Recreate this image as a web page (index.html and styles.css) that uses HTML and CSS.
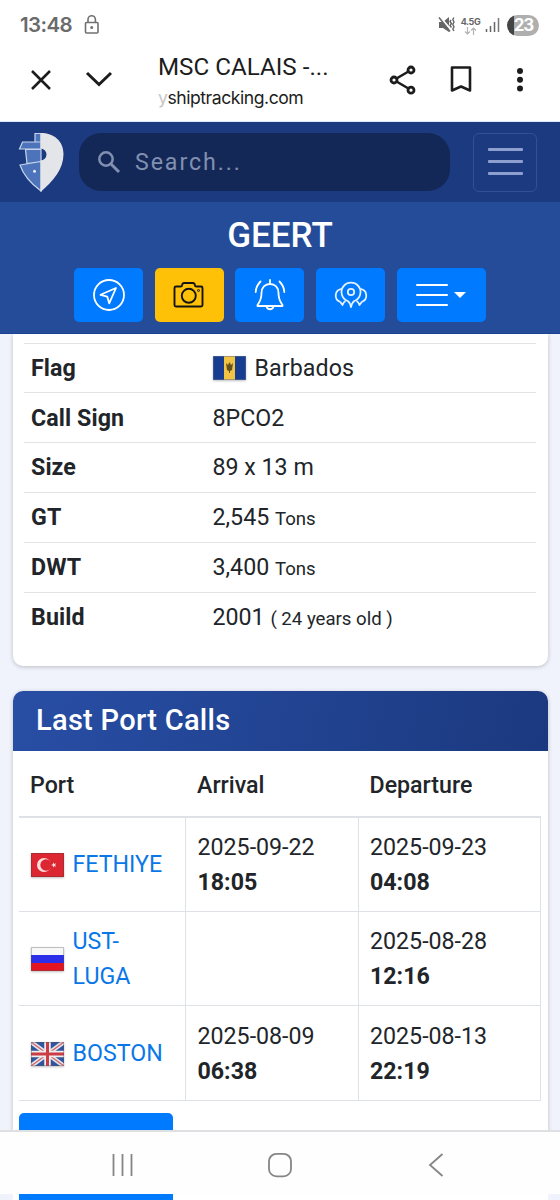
FILE: index.html
```html
<!DOCTYPE html>
<html lang="en">
<head>
<meta charset="utf-8">
<title>MSC CALAIS - GEERT</title>
<link rel="stylesheet" href="styles.css">
</head>
<body>
<div class="phone">
  <div class="status">
    <span class="clock">13:48</span>
    <svg class="lock" width="16" height="20" viewBox="0 0 16 20"><rect x="1.5" y="7.5" width="12.5" height="10.5" rx="1" fill="none" stroke="#717171" stroke-width="1.6"/><path d="M4 7V4.5a3.7 3.7 0 0 1 7.4 0V7" fill="none" stroke="#717171" stroke-width="1.6"/><circle cx="7.7" cy="12.5" r="1.5" fill="#717171"/></svg>
    <svg class="mute" width="18" height="18" viewBox="0 0 18 18"><path d="M1 6h4l6-5v15l-6-4H1z" fill="#666"/><path d="M1 0l13 15" stroke="#fff" stroke-width="2"/><path d="M1 1.500l11 14" stroke="#666" stroke-width="1.5"/><path d="M13 4l-1 1.500 1.500 2-1.500 2 1.500 2M16 1.500l-1.200 2 1.200 2.500-1.200 2.500 1.200 2.500-1.200 2 1.200 2" fill="none" stroke="#666" stroke-width="1.4"/></svg>
    <div class="net"><span>4.5G</span><svg width="13" height="8" viewBox="0 0 13 8"><path d="M3.500 0v7M1 4.500L3.500 7 6 4.500M9.500 8V1M7 3.500L9.500 1 12 3.500" fill="none" stroke="#b4b4b4" stroke-width="1.200"/></svg></div>
    <svg class="signal" width="15" height="16" viewBox="0 0 15 16"><path d="M1.500 12v3M5.500 9v6M9.500 5v10" stroke="#666" stroke-width="1.500"/><path d="M13.500 1v14" stroke="#777" stroke-width="1.500"/></svg>
    <span class="battery">23</span>
  </div>
  <div class="toolbar">
    <svg width="24" height="24" viewBox="0 0 24 24"><path d="M3 3l18 18M21 3L3 21" stroke="#1c1c1c" stroke-width="2.600"/></svg>
    <svg class="chevron" width="28" height="20" viewBox="0 0 28 20"><path d="M2 3l12 11.500L26 3" fill="none" stroke="#1c1c1c" stroke-width="3"/></svg>
    <div class="page-id"><div class="page-title">MSC CALAIS -...</div><div class="page-url"><span class="fade">y</span>shiptracking.com</div></div>
    <svg class="share" width="28" height="30" viewBox="0 0 28 30"><path d="M22 5L5 15l17 10" fill="none" stroke="#1c1c1c" stroke-width="2.500"/><g fill="#fff" stroke="#1c1c1c" stroke-width="2.800"><circle cx="22" cy="5" r="3"/><circle cx="5" cy="15" r="3"/><circle cx="22" cy="25.200" r="3"/></g></svg>
    <svg class="bookmark" width="22" height="27" viewBox="0 0 22 27"><path d="M2 1.500h18v23l-9-4-9 4z" fill="none" stroke="#1c1c1c" stroke-width="2.600" stroke-linejoin="round"/></svg>
    <svg class="dots" width="8" height="26" viewBox="0 0 8 26"><g fill="#1c1c1c"><circle cx="4" cy="4" r="3"/><circle cx="4" cy="12.800" r="3"/><circle cx="4" cy="21.600" r="3"/></g></svg>
  </div>

  <nav class="navbar">
    <svg class="logo" width="46" height="60" viewBox="0 0 46 60"><path d="M17 1.500h6v8.500h-6zM4.500 10H23v7H1.500zM7.500 17.500H23v12L9 31.500zM2 33L23 29.500V59C12 51 5 42 2 33z" fill="#4d73ba" stroke="#c7d4ec" stroke-width="1.200"/><path d="M22.500 1C36 1 45.500 9 45.500 22c0 15-10 27-23 38V28.500a6 6 0 0 0 0-12z" fill="#e4e5e8"/><circle cx="16.500" cy="39.300" r="1.500" fill="#e9eef8"/></svg>
    <div class="search"><svg width="24" height="24" viewBox="0 0 24 24"><circle cx="9" cy="9" r="6.700" fill="none" stroke="#8190b0" stroke-width="2.500"/><path d="M14 14l8 8" stroke="#8190b0" stroke-width="3"/></svg><span>Search...</span></div>
    <div class="menu-btn"><i></i><i></i><i></i></div>
  </nav>

  <header class="ship">
    <h1>GEERT</h1>
    <div class="actions">
      <div class="act"><svg width="34" height="34" viewBox="0 0 34 34" fill="none" stroke="#fff" stroke-width="1.800" stroke-linejoin="round"><circle cx="17" cy="17" r="15"/><path d="M24 10L8.500 16.800l6.700 1.800 2 6.700z"/></svg></div>
      <div class="act photo"><svg width="34" height="34" viewBox="0 0 34 34" fill="none" stroke="#141414" stroke-width="1.900" stroke-linejoin="round"><path d="M4 8.500h4.500q1.500 0 1.700-1.700.2-1.800 2-1.800h8.600q1.800 0 2 1.800.2 1.700 1.700 1.700H29q1.500 0 1.500 1.500v17q0 1.500-1.500 1.500H4q-1.500 0-1.500-1.500v-17Q2.500 8.500 4 8.500z"/><circle cx="16.800" cy="17.800" r="7"/><circle cx="26.500" cy="12.500" r=".4"/></svg></div>
      <div class="act"><svg width="34" height="34" viewBox="0 0 34 34" fill="none" stroke="#fff" stroke-width="1.800" stroke-linecap="round" stroke-linejoin="round"><path d="M17 2v4M17 6c-5 0-8.500 3.500-8.500 9 0 7-2 9-4 12v1h25v-1c-2-3-4-5-4-12 0-5.500-3.500-9-8.500-9zM13.500 28.500a3.600 3.600 0 0 0 7 0M7.500 3.500Q3 8 2.700 14M26.500 3.500Q31 8 31.300 14"/></svg></div>
      <div class="act"><svg width="34" height="34" viewBox="0 0 34 34" fill="none" stroke="#e6f1ff" stroke-width="1.800" stroke-linejoin="round"><path d="M13.700 23a9.500 9.500 0 1 1 6.600 0q-2.300 1.500-3.300 6-1-4.500-3.300-6z"/><circle cx="17" cy="14" r="3.200"/><path d="M8 10.800c-7.500.7-8.500 10.700-1.700 13.200l2.200 3q1-3 3-4M26 10.800c7.500.7 8.500 10.700 1.700 13.200l-2.200 3q-1-3-3-4"/></svg></div>
      <div class="act more"><div class="lines"><i></i><i></i><i></i></div><b class="caret"></b></div>
    </div>
  </header>

  <main class="content">
    <section class="card info">
      <div class="row"><b>Flag</b><span class="country"><svg class="flag" width="33" height="24" viewBox="0 0 33 24"><path d="M0 0h33v24H0z" fill="#173d91"/><path d="M11 0h11v24H11z" fill="#f2c443"/><path d="M13 7l2 2 1.500-3L18 9l2-2-1 7-2 1v2h-1v-2l-2-1z" fill="#655020"/><path d="M0 0h33v24H0z" fill="none" stroke="#5e6e8d" stroke-width="1"/></svg>Barbados</span></div>
      <div class="row"><b>Call Sign</b><span>8PCO2</span></div>
      <div class="row"><b>Size</b><span>89 x 13 m</span></div>
      <div class="row"><b>GT</b><span>2,545 <small>Tons</small></span></div>
      <div class="row"><b>DWT</b><span>3,400 <small>Tons</small></span></div>
      <div class="row"><b>Build</b><span>2001 <small>( 24 years old )</small></span></div>
    </section>

    <section class="card calls">
      <h2>Last Port Calls</h2>
      <table>
        <thead><tr><th class="c1">Port</th><th class="c2">Arrival</th><th>Departure</th></tr></thead>
        <tbody>
          <tr><td><div class="port"><svg class="flag" width="33" height="24" viewBox="0 0 33 24"><path d="M0 0h33v24H0z" fill="#dc2631"/><circle cx="13" cy="12" r="7" fill="#fbdfe0"/><circle cx="15" cy="12" r="5.700" fill="#dc2631"/><path d="M20 12l2-.7.1-2 1.200 1.600 2-.6-1.200 1.700 1.200 1.700-2-.6-1.200 1.600-.1-2z" fill="#fbdfe0"/><path d="M.5.500h32v23H.5z" fill="none" stroke="#a92c34"/></svg><a>FETHIYE</a></div></td><td>2025-09-22<br><b>18:05</b></td><td>2025-09-23<br><b>04:08</b></td></tr>
          <tr><td><div class="port"><svg class="flag" width="33" height="24" viewBox="0 0 33 24"><path d="M0 0h33v8H0z" fill="#f7f7f7"/><path d="M0 8h33v8H0z" fill="#2b2fe9"/><path d="M0 16h33v8H0z" fill="#e31522"/><path d="M.5.500h32v23H.5z" fill="none" stroke="#555" stroke-opacity=".35"/></svg><a>UST-<br>LUGA</a></div></td><td></td><td>2025-08-28<br><b>12:16</b></td></tr>
          <tr><td><div class="port"><svg class="flag" width="33" height="24" viewBox="0 0 33 24"><path d="M0 0h33v24H0z" fill="#2e559e"/><path d="M0 0l33 24M33 0L0 24" stroke="#e4e4e8" stroke-width="4.500"/><path d="M0 0l33 24M33 0L0 24" stroke="#d2636b" stroke-width="1.300"/><path d="M16.500 0v24M0 12h33" stroke="#eee" stroke-width="6.500"/><path d="M16.500 0v24M0 12h33" stroke="#cc3c45" stroke-width="3"/><path d="M.5.500h32v23H.5z" fill="none" stroke="#555" stroke-opacity=".35"/></svg><a>BOSTON</a></div></td><td>2025-08-09<br><b>06:38</b></td><td>2025-08-13<br><b>22:19</b></td></tr>
        </tbody>
      </table>
      <div class="more-calls"></div>
    </section>
  </main>

  <div class="sysnav">
    <svg width="24" height="26" viewBox="0 0 24 26"><path d="M2.500 2v22M11.500 2v22M20.500 2v22" stroke="#858585" stroke-width="1.800"/></svg>
    <svg width="26" height="26" viewBox="0 0 26 26"><rect x="2" y="1.800" width="22" height="22.600" rx="7.500" fill="none" stroke="#858585" stroke-width="1.800"/></svg>
    <svg width="18" height="26" viewBox="0 0 18 26"><path d="M15.500 2L3 13l12.500 11" fill="none" stroke="#858585" stroke-width="1.800"/></svg>
  </div>
  <div class="below"><div class="below-card"><div class="below-btn"></div></div></div>
</div>
</body>
</html>
```
FILE: styles.css
```css
* { box-sizing: border-box; }
body { margin: 0; font-family: Roboto, "Liberation Sans", sans-serif; font-size: 23.2px; line-height: 1.5; color: #212529; background: #fff; }
svg { display: block; flex: none; }
.phone { width: 560px; height: 1200px; overflow: hidden; display: flex; flex-direction: column; }
.status { height: 48px; flex: none; display: flex; align-items: center; padding: 2px 20px 0 20px; }
.clock { font-family: Inter, sans-serif; font-size: 20.5px; font-weight: 600; color: #6b6b6b; width: 64px; letter-spacing: -.6px; }
.mute { margin-left: 338px; }
.net { width: 21px; margin-left: 4px; display: flex; flex-direction: column; align-items: center; font: 700 9px/11px Inter, sans-serif; letter-spacing: -.4px; color: #666; }
.signal { margin-left: 4px; }
.battery { width: 32px; height: 21px; margin-left: 7px; border-radius: 11px; background: linear-gradient(90deg, #444 0 7px, #afafaf 7px); color: #fff; font: 700 17px/20px Inter, sans-serif; letter-spacing: -1px; text-align: center; padding-left: 1px; }
.toolbar { height: 74px; flex: none; display: flex; align-items: center; padding: 0 0 10px 29px; border-bottom: 1px solid #d9e8fb; }
.chevron { margin-left: 32px; }
.page-id { margin-left: 45px; width: 230px; color: #1c1c1c; }
.page-title { font-size: 24.2px; line-height: 33px; white-space: nowrap; padding-top: 2px; }
.page-url { font: 17.6px/27px Inter, Roboto, sans-serif; letter-spacing: -.46px; }
.fade { color: #c6c6c6; }
.share { margin-left: 1px; }
.bookmark { margin-left: 33px; }
.dots { margin-left: 44px; }
.navbar { height: 80px; flex: none; background: #1b3a80; display: flex; align-items: center; padding: 0 23px 0 18px; }
.search { margin-left: 15px; width: 371px; height: 58px; border-radius: 22px; background: #132857; display: flex; align-items: center; padding-left: 18px; color: #8190b0; letter-spacing: 1.900px; font-size: 23.2px; }
.search span { margin-left: 14px; }
.menu-btn { margin-left: 23px; width: 64px; height: 59px; border: 1px solid #31509a; border-radius: 6px; display: flex; flex-direction: column; align-items: center; justify-content: center; gap: 9px; padding-bottom: 1px; }
.menu-btn i { width: 35px; height: 2.7px; background: #8c9fcf; border-radius: 1px; }
.ship { height: 132px; flex: none; background: #244c99; border-bottom: 1px solid #1b4191; }
.ship h1 { margin: 0; height: 66px; font-size: 35px; line-height: 67px; font-weight: 500; color: #fff; text-align: center; }
.actions { display: flex; gap: 11.700px; padding-left: 74px; }
.act { width: 69px; height: 54px; border-radius: 5px; background: #007bff; display: flex; align-items: center; justify-content: center; }
.photo { background: #ffc107; }
.more { width: 89px; gap: 6px; padding-right: 1px; }
.lines { display: flex; flex-direction: column; gap: 8px; }
.lines i { width: 32px; height: 2px; background: #fff; border-radius: 1px; }
.caret { border: 6.500px solid transparent; border-top-color: #fff; border-bottom: 0; }
.content { height: 796px; flex: none; overflow: hidden; background: #f0f3fc; padding: 0 12px 0 13px; }
.card { background: #fff; border-radius: 10px; box-shadow: 0 1px 4px rgba(0, 0, 0, .22); }
.info { height: 332px; padding: 8.600px 12px 0 11px; border-radius: 0 0 10px 10px; }
.row { height: 49.9px; border-top: 1px solid #e2e3e5; display: flex; align-items: center; }
.row b { width: 188.500px; padding-left: 7px; font-weight: 700; letter-spacing: .1px; }
.row small { font-size: 18.6px; }
.country { display: flex; align-items: center; gap: 9px; letter-spacing: .1px; }
.flag { filter: drop-shadow(0 1px 1px rgba(0, 0, 0, .25)); }
.calls { margin-top: 25px; height: 600px; overflow: hidden; }
.calls h2 { margin: 0; height: 60px; padding-left: 23px; background: linear-gradient(105deg, #284ea5, #1b397f); color: #fff; font-size: 29px; font-weight: 500; line-height: 58px; letter-spacing: .3px; }
table { width: 522px; margin-left: 6px; table-layout: fixed; border-collapse: separate; border-spacing: 0; }
th { height: 66.600px; padding: 5px 12px 0 11px; text-align: left; font-weight: 500; border-bottom: 2px solid #dee2e6; }
.c1 { width: 167px; }
.c2 { width: 172.500px; }
td { height: 94.400px; padding: 1px 12px 0 11.500px; vertical-align: middle; border-right: 1px solid #dee2e6; border-bottom: 1px solid #dee2e6; }
td b { font-weight: 700; }
.port { display: flex; align-items: center; gap: 9px; }
.port a { color: #0a77e8; }
.more-calls { width: 154px; height: 90px; margin: 12px 0 0 6px; border-radius: 5px; background: #007bff; }
.sysnav { height: 64px; flex: none; background: #fefefe; border-top: 2px solid #dfe0e4; display: flex; align-items: center; gap: 132px; padding: 3px 0 0 111px; }
.sysnav svg + svg + svg { margin-left: 2px; }
.below { height: 6px; flex: none; background: #f0f3fc; padding: 0 12px 0 13px; }
.below-card { height: 6px; background: #fff; padding-left: 6px; }
.below-btn { width: 154px; height: 6px; background: #007bff; }
```
